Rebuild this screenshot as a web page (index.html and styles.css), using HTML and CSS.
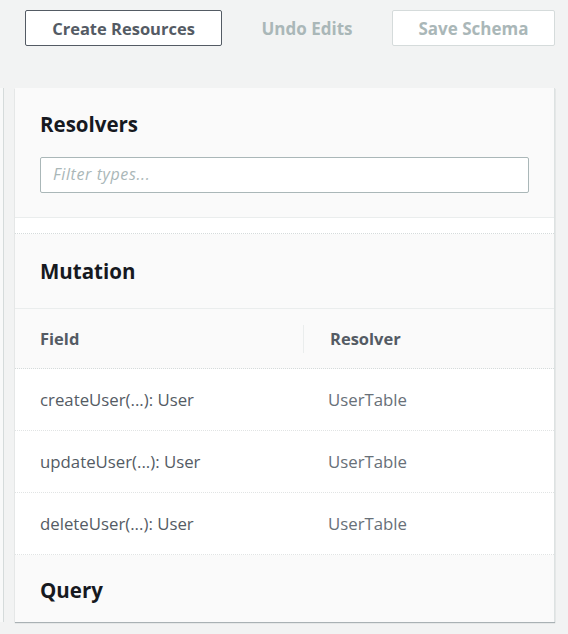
FILE: index.html
```html
<!DOCTYPE html>
<html>
<head>
<meta charset="utf-8">
<link rel="stylesheet" href="styles.css">
</head>
<body>
<div class="toolbar">
  <button class="btn btn-primary">Create Resources</button>
  <button class="btn btn-link">Undo Edits</button>
  <button class="btn btn-disabled">Save Schema</button>
</div>
<div class="content">
  <div class="side"></div>
  <div class="panel">
    <div class="section head">
      <h2>Resolvers</h2>
      <div class="filter">Filter types...</div>
    </div>
    <div class="spacer"></div>
    <div class="section type">
      <h2>Mutation</h2>
    </div>
    <div class="thead">
      <div class="col-field">Field</div>
      <div class="col-res">Resolver</div>
    </div>
    <div class="row"><div class="col-field">createUser(...): User</div><div class="col-res res">UserTable</div></div>
    <div class="row"><div class="col-field">updateUser(...): User</div><div class="col-res res">UserTable</div></div>
    <div class="row"><div class="col-field">deleteUser(...): User</div><div class="col-res res">UserTable</div></div>
    <div class="section query">
      <h2>Query</h2>
    </div>
  </div>
</div>
</body>
</html>
```
FILE: styles.css
```css
* { box-sizing: border-box; }
html, body { margin: 0; padding: 0; }
body {
  background: #f2f3f3;
  font-family: "Open Sans", "Noto Sans", sans-serif;
  width: 568px;
  height: 634px;
  overflow: hidden;
}
.toolbar {
  display: flex;
  height: 56px;
  padding: 10px 0 0 25px;
  align-items: flex-start;
}
.btn {
  font-family: inherit;
  font-weight: 700;
  font-size: 16.5px;
  height: 36px;
  border-radius: 2px;
  background: #fff;
  padding: 0;
}
.btn-primary {
  width: 197px;
  border: 1px solid #545b64;
  color: #545b64;
}
.btn-link {
  width: 170px;
  border: none;
  background: transparent;
  color: #aab7b8;
  font-size: 17px;
}
.btn-disabled {
  width: 163px;
  border: 1px solid #d5dbdb;
  color: #aab7b8;
  font-size: 17px;
}
.content {
  display: flex;
  margin-top: 32px;
}
.side {
  width: 4px;
  height: 534px;
  border-right: 1px solid #d5dbdb;
  background: #f8f9f9;
  margin-right: 11px;
}
.panel {
  width: 540px;
  height: 534px;
  background: #fff;
  border-right: 1px solid #dde2e2;
  box-shadow: 0 1px 1px rgba(0, 28, 36, 0.3);
  overflow: hidden;
}
.section {
  background: #fafafa;
  padding: 0 25px;
}
h2 {
  margin: 0;
  font-size: 20.5px;
  font-weight: 700;
  color: #16191f;
  line-height: 28px;
}
.head {
  height: 130px;
  padding-top: 22px;
  border-bottom: 1px solid #eaeded;
}
.filter {
  margin-top: 19px;
  height: 36px;
  width: 489px;
  border: 1px solid #aab7b8;
  border-radius: 2px;
  background: #fff;
  font-style: italic;
  font-size: 16px;
  letter-spacing: 0.6px;
  color: #aab7b8;
  padding: 5px 12px;
}
.spacer {
  height: 16px;
  border-bottom: 1px dotted #d5dbdb;
}
.type {
  height: 75px;
  padding-top: 23px;
  border-bottom: 1px solid #eaeded;
}
.thead {
  display: flex;
  align-items: center;
  height: 60px;
  background: #fafafa;
  border-bottom: 1px dotted #d5dbdb;
  font-weight: 700;
  font-size: 16.5px;
  color: #545b64;
}
.thead .col-res {
  border-left: 1px solid #eaeded;
  padding-left: 26px;
  height: 28px;
  line-height: 28px;
}
.col-field {
  width: 288px;
  padding-left: 25px;
}
.col-res {
  flex: 1;
}
.row {
  display: flex;
  align-items: center;
  height: 62px;
  border-bottom: 1px dotted #e1e4e4;
  font-size: 16.8px;
  color: #545b64;
}
.row .col-res {
  padding-left: 25px;
}
.res {
  color: #687078;
}
.query {
  height: 68px;
  padding-top: 21px;
}
```
